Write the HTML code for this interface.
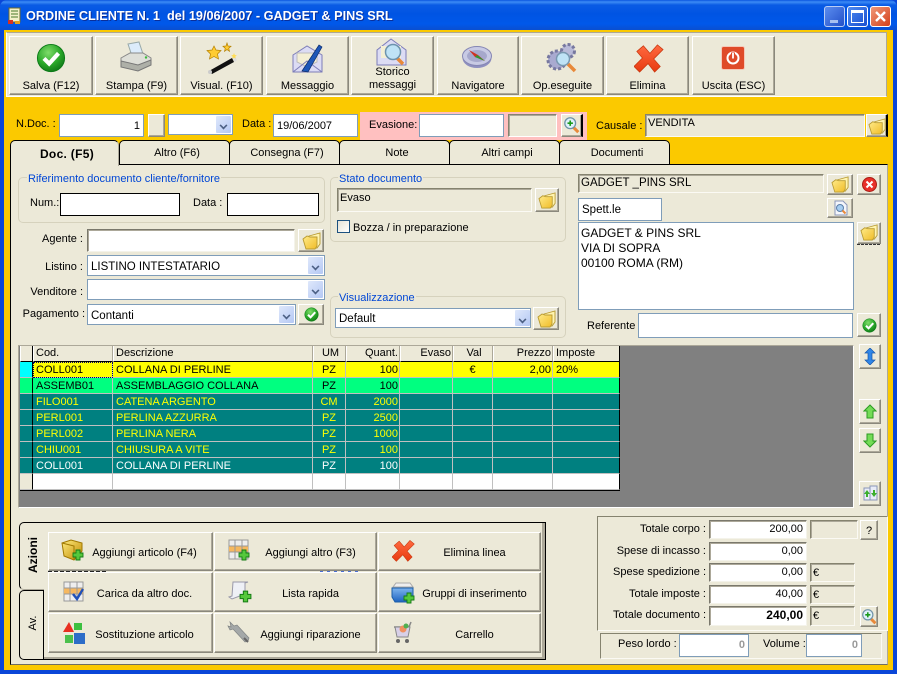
<!DOCTYPE html>
<html lang="it"><head><meta charset="utf-8"><title>Ordine cliente</title>
<style>
html,body{margin:0;padding:0;background:#0a46d8}
#w{position:relative;width:897px;height:674px;overflow:hidden;font:11px/14px "Liberation Sans",sans-serif;color:#000;background:#0a46d8}
#w div,#w span.a,#w svg.i{position:absolute;box-sizing:border-box}
.t{white-space:pre;height:14px}
.r{text-align:right}.c{text-align:center}
.btn{background:#ece9d8;border:1px solid;border-color:#fff #8a887c #8a887c #fff;box-shadow:inset -1px -1px #aca899}
.inp{background:#fff;border:1px solid #7f9db9;padding:4px 3px 2px;white-space:pre}
.blk{background:#fff;border:1px solid #000}
.sun{background:#fff;border:1px solid;border-color:#7a786c #f4f3ea #f4f3ea #7a786c;box-shadow:inset 1px 1px #aca899;white-space:pre;text-align:right;padding:1px 3px}
.gry{background:#ece9d8;border:1px solid;border-color:#85836f #fbfaf4 #fbfaf4 #85836f;box-shadow:inset 1px 1px #aca899;white-space:pre;padding:1px 2px 0}
.grp{border:1px solid #d6d2bd;border-radius:5px}
.leg{color:#0046d5;background:#ece9d8;white-space:pre;height:14px;padding:0 1px}
.arr{background:linear-gradient(135deg,#dfe8fb,#b4c8f4);border-radius:1px}
.arr:after{content:"";position:absolute;left:4px;top:6px;width:5px;height:5px;border-right:2px solid #4d6185;border-bottom:2px solid #4d6185;transform:rotate(45deg) scale(.8)}
.tab{background:#ece9d8;border:1px solid #000;border-radius:5px 5px 0 0;text-align:center;line-height:25px;font-size:11px;padding-left:5px}
.bl{font-size:11px;text-align:center;white-space:pre;height:14px}
table{border-collapse:separate;border-spacing:0;table-layout:fixed;font:11px/14px "Liberation Sans",sans-serif}
td{box-sizing:border-box;height:16px;padding:0 1px 0 3px;border-right:1px solid #c0c0c0;border-bottom:1px solid #c0c0c0;overflow:hidden;white-space:pre}
tr.h td{background:#ece9d8;border-bottom:1px solid #000;border-left:1px solid #fff;border-right:1px solid #aca899;padding-left:2px;line-height:15px}
tr.y td{background:#ff0;color:#000}tr.g td{background:#00ff80;color:#000}tr.e td{background:#008080;color:#ff0}tr.f td{background:#008080;color:#fff}tr.w td{background:#fff}
td.n{text-align:right}td.m{text-align:center;padding:0}
td.x{border-right:1px solid #000!important;padding:0}
</style></head><body>
<svg width="0" height="0" style="position:absolute">
<defs>
<radialGradient id="gc" cx=".4" cy=".3" r=".8"><stop offset="0" stop-color="#7fdc6a"/><stop offset=".55" stop-color="#2aa82a"/><stop offset="1" stop-color="#0b6e14"/></radialGradient>
<linearGradient id="gr" x1="0" y1="0" x2="0" y2="1"><stop offset="0" stop-color="#ff6a40"/><stop offset="1" stop-color="#e83a10"/></linearGradient>
<linearGradient id="gf" x1="0" y1="0" x2="1" y2="1"><stop offset="0" stop-color="#ffeb8a"/><stop offset="1" stop-color="#f0bc28"/></linearGradient>
<linearGradient id="gb" x1="0" y1="0" x2="0" y2="1"><stop offset="0" stop-color="#7db4ee"/><stop offset="1" stop-color="#1d63c0"/></linearGradient>
<linearGradient id="gy" x1="0" y1="0" x2="1" y2="1"><stop offset="0" stop-color="#ffec80"/><stop offset="1" stop-color="#c08a00"/></linearGradient>
<symbol id="ck" viewBox="0 0 32 32"><circle cx="16" cy="16" r="14.5" fill="url(#gc)" stroke="#0c7a18"/><path d="M8.5 16.5l5.5 5.5L24 11" fill="none" stroke="#fff" stroke-width="4.4"/></symbol>
<symbol id="xx" viewBox="0 0 32 32"><path d="M3 9L10 3l7 8 8-9 6 5-10 10 7 8-6 6-7-9-9 9-6-6 9-9z" fill="url(#gr)" stroke="#c8380f" stroke-width=".8"/></symbol>
<symbol id="fo" viewBox="0 0 20 20"><path d="M7 5l11-3v11l-3 4H9z" fill="#fff4b0" stroke="#b89a30" stroke-width=".9"/><path d="M1 8l4-3 3 1 7 0 0 9-2 3H4z" fill="url(#gf)" stroke="#b89a30" stroke-width=".9"/></symbol>
<symbol id="zm" viewBox="0 0 20 20"><path d="M11 12l6 6" stroke="#e8893a" stroke-width="3.4"/><circle cx="8" cy="8" r="6" fill="#dff0fb" stroke="#6f93a8" stroke-width="1.4"/><path d="M5 8h6M8 5v6" stroke="#1a9a1a" stroke-width="1.8"/></symbol>
<symbol id="pl" viewBox="0 0 12 12"><path d="M4 1h4v3h3v4H8v3H4V8H1V4h3z" fill="#55c83c" stroke="#157a14" stroke-width=".9"/></symbol>
</defs></svg>
<div id="w">
<!-- title bar -->
<div style="left:0;top:0;width:897px;height:30px;border-radius:7px 7px 0 0;background:linear-gradient(#0a56e0 0,#3d8bf5 2px,#0a5be4 5px,#0054e3 14px,#0058ea 24px,#0a4fd0 30px)"></div>
<svg class="i" style="left:8px;top:7px" width="14" height="18" viewBox="0 0 14 18"><rect x="1" y="1" width="11" height="14" fill="#f3f0c8" stroke="#6d6a30"/><path d="M3 4h7M3 7h7M3 10h7" stroke="#4a7a2a"/><rect x="0" y="13" width="5" height="4" fill="#d83020"/><rect x="7" y="14" width="5" height="3" fill="#e0a020"/></svg>
<div class="t" style="left:26px;top:9px;width:400px;color:#fff;font-weight:bold;font-size:12.7px;text-shadow:1px 1px #0a2f9a">ORDINE CLIENTE N. 1  del 19/06/2007 - GADGET &amp; PINS SRL</div>
<div style="left:824px;top:6px;width:21px;height:21px;border:1px solid #b9cdf5;border-radius:3px;background:linear-gradient(135deg,#5b8def,#2350c8)"><div style="left:5px;top:13px;width:8px;height:3px;background:#a8c0f0"></div></div>
<div style="left:847px;top:6px;width:21px;height:21px;border:1px solid #fff;border-radius:3px;background:linear-gradient(135deg,#4f8bf0,#1a4fd0)"><div style="left:3px;top:3px;width:13px;height:13px;border:1px solid #fff;border-top-width:3px"></div></div>
<div style="left:870px;top:6px;width:21px;height:21px;border:1px solid #fff;border-radius:3px;background:linear-gradient(135deg,#f09878,#d4401a)"><svg class="i" style="left:3px;top:3px" width="13" height="13" viewBox="0 0 13 13"><path d="M2 2l9 9M11 2l-9 9" stroke="#fff" stroke-width="2.4"/></svg></div>
<!-- yellow body -->
<div style="left:4px;top:30px;width:889px;height:640px;background:#fbc900"></div>
<!-- toolbar -->
<div style="left:6px;top:32px;width:881px;height:65px;background:#ece9d8;border:1px solid;border-color:#aca899 #aca899 #fff #fff"></div>
<div class="btn" style="left:9px;top:36px;width:84px;height:59px"><div class="c t" style="left:0;width:82px;top:42px">Salva (F12)</div></div>
<div class="btn" style="left:95px;top:36px;width:83px;height:59px"><div class="c t" style="left:0;width:81px;top:42px">Stampa (F9)</div></div>
<div class="btn" style="left:180px;top:36px;width:83px;height:59px"><div class="c t" style="left:0;width:81px;top:42px">Visual. (F10)</div></div>
<div class="btn" style="left:266px;top:36px;width:83px;height:59px"><div class="c t" style="left:0;width:81px;top:42px">Messaggio</div></div>
<div class="btn" style="left:351px;top:36px;width:83px;height:59px"><div class="c t" style="left:0;width:81px;top:29px;height:28px;line-height:13px;white-space:normal">Storico messaggi</div></div>
<div class="btn" style="left:437px;top:36px;width:82px;height:59px"><div class="c t" style="left:0;width:80px;top:42px">Navigatore</div></div>
<div class="btn" style="left:521px;top:36px;width:83px;height:59px"><div class="c t" style="left:0;width:81px;top:42px">Op.eseguite</div></div>
<div class="btn" style="left:606px;top:36px;width:83px;height:59px"><div class="c t" style="left:0;width:81px;top:42px">Elimina</div></div>
<div class="btn" style="left:692px;top:36px;width:83px;height:59px"><div class="c t" style="left:0;width:81px;top:42px">Uscita (ESC)</div></div>
<svg class="i" style="left:36px;top:43px" width="30" height="30"><use href="#ck"/></svg>
<svg class="i" style="left:120px;top:41px" width="32" height="32" viewBox="0 0 32 32"><path d="M8 3l11-2 4 12-11 2z" fill="#dcecfb" stroke="#9aa"/><path d="M1 17l9-5h13l8 5v6l-13 6-17-4z" fill="#dedfd8" stroke="#888"/><path d="M1 20l17 4 13-5v5l-13 6-17-4z" fill="#aeb0a8" stroke="#777"/><circle cx="26" cy="16.500" r="1.200" fill="#3bbb3b"/></svg>
<svg class="i" style="left:206px;top:42px" width="32" height="32" viewBox="0 0 32 32"><path d="M3 29L26 16l2 4L6 32z" fill="#111"/><circle cx="4" cy="30" r="2" fill="#ccc"/><path d="M26 15l3 5 2-2-2-4z" fill="#ddd"/><path d="M8 4l2 4 5 .5-3.5 3.5 1 5-4.5-2.500-4.500 2.500 1-5L1 8.500 6 8z" fill="#fc3" stroke="#b58000" stroke-width=".7"/><path d="M21 1l1 3 3 .300-2.300 2 .8 3-2.500-1.700-2.500 1.700.8-3L17 4.300 20 4z" fill="#fc3" stroke="#b58000" stroke-width=".7"/><path d="M28 11l.8 2 2 .2-1.500 1.400.4 2-1.700-1-1.700 1 .4-2-1.500-1.400 2-.2z" fill="#fd5"/></svg>
<svg class="i" style="left:292px;top:42px" width="32" height="32" viewBox="0 0 32 32"><path d="M1 13L15 4l15 9v17H1z" fill="#dcdcf4" stroke="#7d7db8"/><path d="M5 11h20v9L15 25 5 20z" fill="#f4efd4" stroke="#bbb"/><path d="M1 30l14-11 15 11" fill="none" stroke="#7d7db8"/><path d="M10 29L27 3l3 2-14 25z" fill="#1d56b8" stroke="#0d2c6a" stroke-width=".7"/></svg>
<svg class="i" style="left:376px;top:37px" width="32" height="32" viewBox="0 0 32 32"><path d="M1 13L15 2l15 11v15H1z" fill="#dcdcf4" stroke="#7d7db8"/><path d="M5 9h20v12H5z" fill="#f4efd4"/><path d="M21 21l6 6" stroke="#e8893a" stroke-width="3.5"/><circle cx="17" cy="15" r="7.500" fill="#bfe3f6" stroke="#6d93ad" stroke-width="1.500"/></svg>
<svg class="i" style="left:462px;top:45px" width="30" height="24" viewBox="0 0 30 24"><ellipse cx="15" cy="13" rx="14.500" ry="10" fill="#8f90c0"/><ellipse cx="15" cy="11" rx="14.500" ry="9.500" fill="#c8cae4" stroke="#8586b4"/><ellipse cx="15" cy="11" rx="10" ry="6" fill="#a6a8cc"/><path d="M7 5l9 5 7 6-10-4z" fill="#d03020"/><path d="M15 10l8 6-10-4z" fill="#2a9a30"/></svg>
<svg class="i" style="left:546px;top:42px" width="32" height="32" viewBox="0 0 32 32"><circle cx="11" cy="18" r="9" fill="#a9aad0" stroke="#77789f" stroke-width="3" stroke-dasharray="3 2"/><circle cx="22" cy="9" r="6.500" fill="#b9bad8" stroke="#77789f" stroke-width="3" stroke-dasharray="3 2"/><path d="M22 22l7 7" stroke="#e8893a" stroke-width="3.500"/><circle cx="17" cy="17" r="6.500" fill="#bfe3f6" stroke="#7898b0" stroke-width="1.500"/></svg>
<svg class="i" style="left:634px;top:43px" width="30" height="30"><use href="#xx"/></svg>
<svg class="i" style="left:721px;top:46px" width="24" height="24" viewBox="0 0 24 24"><rect x=".5" y=".5" width="23" height="23" rx="2" fill="#df4a28" stroke="#f5c8b8"/><circle cx="12" cy="12" r="5.500" fill="none" stroke="#fff" stroke-width="2"/><path d="M12 6.500v6" stroke="#df4a28" stroke-width="4"/><path d="M12 7v5.500" stroke="#fff" stroke-width="1.800"/></svg>
<!-- doc row -->
<div class="t" style="left:16px;top:117px">N.Doc. :</div>
<div class="inp r" style="left:59px;top:114px;width:85px;height:23px">1</div>
<div class="btn" style="left:148px;top:114px;width:17px;height:23px"></div>
<div class="inp" style="left:168px;top:114px;width:65px;height:21px"><div class="arr" style="left:47px;top:1px;width:15px;height:17px"></div></div>
<div class="t" style="left:242px;top:117px">Data :</div>
<div class="inp" style="left:273px;top:114px;width:85px;height:23px">19/06/2007</div>
<div style="left:360px;top:112px;width:227px;height:28px;background:#ffc0c0"></div>
<div class="t" style="left:369px;top:118px">Evasione:</div>
<div class="inp" style="left:419px;top:114px;width:85px;height:23px"></div>
<div class="gry" style="left:508px;top:114px;width:49px;height:23px;border-color:#85836f #fff #fff #85836f"></div>
<div class="btn" style="left:561px;top:114px;width:22px;height:23px;border-right:2px solid #000"><svg class="i" style="left:1px;top:1px" width="18" height="18"><use href="#zm"/></svg></div>
<div class="t" style="left:596px;top:119px">Causale :</div>
<div class="gry" style="left:645px;top:114px;width:220px;height:23px">VENDITA</div>
<div class="btn" style="left:866px;top:114px;width:22px;height:23px;border-right:2px solid #000"><svg class="i" style="left:1px;top:2px" width="19" height="19"><use href="#fo"/></svg></div>
<!-- tab panel -->
<div style="left:10px;top:164px;width:878px;height:501px;background:#ece9d8;border:1px solid;border-color:#000 #aca899 #6f6e62 #000"></div>
<div class="tab" style="left:119px;top:140px;width:111px;height:25px">Altro (F6)</div>
<div class="tab" style="left:229px;top:140px;width:111px;height:25px">Consegna (F7)</div>
<div class="tab" style="left:339px;top:140px;width:111px;height:25px">Note</div>
<div class="tab" style="left:449px;top:140px;width:111px;height:25px">Altri campi</div>
<div class="tab" style="left:559px;top:140px;width:111px;height:25px">Documenti</div>
<div class="tab" style="left:10px;top:140px;width:109px;height:26px;border-bottom:0;border-right-color:#aca899;font-weight:bold;font-size:12px;line-height:26px;letter-spacing:.3px">Doc. (F5)</div>
<!-- riferimento -->
<div class="grp" style="left:18px;top:177px;width:307px;height:46px"></div>
<div class="leg" style="left:27px;top:172px">Riferimento documento cliente/fornitore</div>
<div class="t" style="left:30px;top:196px">Num.:</div>
<div class="blk" style="left:60px;top:193px;width:120px;height:23px"></div>
<div class="t" style="left:193px;top:196px">Data :</div>
<div class="blk" style="left:227px;top:193px;width:92px;height:23px"></div>
<div class="t r" style="left:20px;width:63px;top:232px">Agente :</div>
<div class="sun" style="left:87px;top:229px;width:208px;height:23px"></div>
<div class="btn" style="left:298px;top:229px;width:26px;height:23px"><svg class="i" style="left:3px;top:1px" width="20" height="20"><use href="#fo"/></svg></div>
<div class="t r" style="left:20px;width:63px;top:260px">Listino :</div>
<div class="inp" style="left:87px;top:255px;width:238px;height:21px;font-size:11.5px">LISTINO INTESTATARIO<div class="arr" style="left:220px;top:1px;width:15px;height:17px"></div></div>
<div class="t r" style="left:20px;width:63px;top:285px">Venditore :</div>
<div class="inp" style="left:87px;top:279px;width:238px;height:21px"><div class="arr" style="left:220px;top:1px;width:15px;height:17px"></div></div>
<div class="t r" style="left:18px;width:67px;top:307px">Pagamento :</div>
<div class="inp" style="left:87px;top:304px;width:209px;height:21px;font-size:11.5px">Contanti<div class="arr" style="left:191px;top:1px;width:15px;height:17px"></div></div>
<div class="btn" style="left:298px;top:304px;width:26px;height:21px"><svg class="i" style="left:5px;top:2px" width="15" height="15"><use href="#ck"/></svg></div>
<!-- stato -->
<div class="grp" style="left:330px;top:177px;width:236px;height:65px"></div>
<div class="leg" style="left:338px;top:172px">Stato documento</div>
<div class="gry" style="left:337px;top:188px;width:195px;height:24px;padding-top:2px">Evaso</div>
<div class="btn" style="left:535px;top:188px;width:24px;height:24px"><svg class="i" style="left:2px;top:2px" width="19" height="19"><use href="#fo"/></svg></div>
<div style="left:337px;top:220px;width:13px;height:13px;background:linear-gradient(135deg,#e4e2d6,#fff);border:1px solid #1c5180"></div>
<div class="t" style="left:353px;top:221px">Bozza / in preparazione</div>
<!-- visualizzazione -->
<div class="grp" style="left:330px;top:296px;width:236px;height:42px"></div>
<div class="leg" style="left:338px;top:291px">Visualizzazione</div>
<div class="inp" style="left:335px;top:308px;width:196px;height:20px;padding:3px 3px 1px;font-size:11.5px">Default<div class="arr" style="left:179px;top:1px;width:15px;height:16px"></div></div>
<div class="btn" style="left:533px;top:307px;width:26px;height:23px"><svg class="i" style="left:3px;top:1px" width="20" height="20"><use href="#fo"/></svg></div>
<!-- cliente -->
<div class="gry" style="left:578px;top:174px;width:246px;height:19px;padding-top:1px;font-size:11.5px">GADGET _PINS SRL</div>
<div class="btn" style="left:827px;top:174px;width:26px;height:21px"><svg class="i" style="left:3px;top:0" width="19" height="19"><use href="#fo"/></svg></div>
<div class="btn" style="left:857px;top:174px;width:24px;height:21px"><svg class="i" style="left:4px;top:2px" width="15" height="15" viewBox="0 0 15 15"><circle cx="7.500" cy="7.500" r="7" fill="#e8302a" stroke="#a81c14"/><path d="M4.500 4.500l6 6M10.500 4.500l-6 6" stroke="#fff" stroke-width="2"/></svg></div>
<div class="inp" style="left:578px;top:198px;width:84px;height:23px;font-size:11.5px">Spett.le</div>
<div class="btn" style="left:827px;top:198px;width:26px;height:20px"><svg class="i" style="left:6px;top:1px" width="14" height="16" viewBox="0 0 14 16"><path d="M1 1h8l4 4v10H1z" fill="#f4f6fb" stroke="#8a96b8"/><circle cx="6" cy="8" r="3.500" fill="#a6cdf0" stroke="#5a7ea8"/><path d="M8.500 10.500l3 3" stroke="#e8893a" stroke-width="2"/></svg></div>
<div class="inp" style="left:578px;top:222px;width:276px;height:88px;font-size:12px;line-height:15px;padding:3px 2px">GADGET &amp; PINS SRL
VIA DI SOPRA
00100 ROMA (RM)</div>
<div class="btn" style="left:857px;top:222px;width:24px;height:22px"><svg class="i" style="left:2px;top:0" width="19" height="19"><use href="#fo"/></svg></div>
<div style="left:857px;top:244px;width:24px;height:1px;background:repeating-linear-gradient(90deg,#333 0 3px,#ece9d8 3px 4px)"></div>
<div class="t" style="left:587px;top:319px">Referente</div>
<div class="inp" style="left:638px;top:313px;width:215px;height:25px"></div>
<div class="btn" style="left:857px;top:313px;width:24px;height:24px"><svg class="i" style="left:4px;top:4px" width="15" height="15"><use href="#ck"/></svg></div>
<!-- grid -->
<div style="left:18px;top:345px;width:836px;height:163px;background:#808080;border:1px solid;border-color:#aca899 #fff #fff #aca899"></div>
<div style="left:20px;top:346px;width:600px;height:145px;background:#fff;border-bottom:1px solid #000">
<table style="width:600px;position:absolute;left:0;top:0">
<colgroup><col style="width:13px"><col style="width:80px"><col style="width:200px"><col style="width:33px"><col style="width:54px"><col style="width:53px"><col style="width:40px"><col style="width:60px"><col style="width:67px"></colgroup>
<tr class="h"><td class="x" style="background:#ece9d8"></td><td>Cod.</td><td>Descrizione</td><td class="m">UM</td><td class="n">Quant.</td><td class="n">Evaso</td><td class="m">Val</td><td class="n">Prezzo</td><td style="border-right:1px solid #000">Imposte</td></tr>
<tr class="y"><td class="x" style="background:#0ff"></td><td style="outline:1px dotted #00006a;outline-offset:-1px">COLL001</td><td>COLLANA DI PERLINE</td><td class="m">PZ</td><td class="n">100</td><td></td><td class="m">€</td><td class="n">2,00</td><td style="border-right:1px solid #000">20%</td></tr>
<tr class="g"><td class="x" style="background:#00ff80"></td><td>ASSEMB01</td><td>ASSEMBLAGGIO COLLANA</td><td class="m">PZ</td><td class="n">100</td><td></td><td></td><td></td><td style="border-right:1px solid #000"></td></tr>
<tr class="e"><td class="x"></td><td>FILO001</td><td>CATENA ARGENTO</td><td class="m">CM</td><td class="n">2000</td><td></td><td></td><td></td><td style="border-right:1px solid #000"></td></tr>
<tr class="e"><td class="x"></td><td>PERL001</td><td>PERLINA AZZURRA</td><td class="m">PZ</td><td class="n">2500</td><td></td><td></td><td></td><td style="border-right:1px solid #000"></td></tr>
<tr class="e"><td class="x"></td><td>PERL002</td><td>PERLINA NERA</td><td class="m">PZ</td><td class="n">1000</td><td></td><td></td><td></td><td style="border-right:1px solid #000"></td></tr>
<tr class="e"><td class="x"></td><td>CHIU001</td><td>CHIUSURA A VITE</td><td class="m">PZ</td><td class="n">100</td><td></td><td></td><td></td><td style="border-right:1px solid #000"></td></tr>
<tr class="f"><td class="x"></td><td>COLL001</td><td>COLLANA DI PERLINE</td><td class="m">PZ</td><td class="n">100</td><td></td><td></td><td></td><td style="border-right:1px solid #000"></td></tr>
<tr class="w"><td class="x" style="background:#ece9d8"></td><td></td><td></td><td></td><td></td><td></td><td></td><td></td><td style="border-right:1px solid #000"></td></tr>
</table></div>
<!-- side buttons -->
<div class="btn" style="left:859px;top:344px;width:22px;height:25px"><svg class="i" style="left:4px;top:3px" width="12" height="17" viewBox="0 0 12 17"><path d="M6 0l5 5H8v7h3l-5 5-5-5h3V5H1z" fill="#2f86e8" stroke="#1655a8" stroke-width=".7"/></svg></div>
<div class="btn" style="left:859px;top:399px;width:22px;height:25px"><svg class="i" style="left:3px;top:4px" width="14" height="15" viewBox="0 0 14 15"><path d="M7 1l6 6H10v7H4V7H1z" fill="#74dc56" stroke="#2c9a22"/></svg></div>
<div class="btn" style="left:859px;top:428px;width:22px;height:25px"><svg class="i" style="left:3px;top:4px" width="14" height="15" viewBox="0 0 14 15"><path d="M7 14l6-6H10V1H4v7H1z" fill="#74dc56" stroke="#2c9a22"/></svg></div>
<div class="btn" style="left:859px;top:481px;width:22px;height:25px"><svg class="i" style="left:3px;top:3px" width="15" height="17" viewBox="0 0 15 17"><rect x="1" y="3" width="7" height="12" fill="#e8ecf8" stroke="#8a96b8"/><rect x="7" y="1" width="7" height="14" fill="#e8ecf8" stroke="#8a96b8"/><path d="M1 9l3-4 3 4H5v3H3V9z" fill="#3cb02c"/><path d="M14 8l-3 4-3-4h2V5h2v3z" fill="#3cb02c"/></svg></div>
<!-- bottom tabs -->
<div style="left:43px;top:522px;width:503px;height:138px;background:#ece9d8;border:1px solid #000;border-left:0;box-shadow:inset -3px -2px 0 #aca899"></div>
<div style="left:19px;top:522px;width:25px;height:68px;background:#ece9d8;border:1px solid #000;border-right:0;border-bottom:1px solid #aca899;border-radius:5px 0 0 5px"></div>
<div style="left:19px;top:590px;width:25px;height:70px;background:#ece9d8;border:1px solid #000;border-radius:5px 0 0 5px"></div>
<div class="t c" style="left:3px;top:548px;width:60px;font-weight:bold;font-size:12px;transform:rotate(-90deg)">Azioni</div>
<div class="t c" style="left:3px;top:616px;width:60px;transform:rotate(-90deg)">Av.</div>
<div style="left:48px;top:570px;width:60px;height:2px;background:repeating-linear-gradient(90deg,#222 0 4px,transparent 4px 6px)"></div>
<div style="left:320px;top:570px;width:42px;height:2px;background:repeating-linear-gradient(90deg,#4a6ed0 0 3px,transparent 3px 7px)"></div>
<div class="btn" style="left:48px;top:532px;width:165px;height:39px"><div class="bl" style="left:28px;width:135px;top:13px">Aggiungi articolo (F4)</div></div>
<div class="btn" style="left:214px;top:532px;width:163px;height:39px"><div class="bl" style="left:29px;width:133px;top:13px">Aggiungi altro (F3)</div></div>
<div class="btn" style="left:378px;top:532px;width:163px;height:39px"><div class="bl" style="left:29px;width:133px;top:13px">Elimina linea</div></div>
<div class="btn" style="left:48px;top:572px;width:165px;height:40px"><div class="bl" style="left:28px;width:135px;top:14px">Carica da altro doc.</div></div>
<div class="btn" style="left:214px;top:572px;width:163px;height:40px"><div class="bl" style="left:29px;width:133px;top:14px">Lista rapida</div></div>
<div class="btn" style="left:378px;top:572px;width:163px;height:40px"><div class="bl" style="left:29px;width:133px;top:14px">Gruppi di inserimento</div></div>
<div class="btn" style="left:48px;top:613px;width:165px;height:40px"><div class="bl" style="left:28px;width:135px;top:14px">Sostituzione articolo</div></div>
<div class="btn" style="left:214px;top:613px;width:163px;height:40px"><div class="bl" style="left:29px;width:133px;top:14px">Aggiungi riparazione</div></div>
<div class="btn" style="left:378px;top:613px;width:163px;height:40px"><div class="bl" style="left:29px;width:133px;top:14px">Carrello</div></div>
<svg class="i" style="left:61px;top:538px" width="24" height="24" viewBox="0 0 24 24"><path d="M1 5l9-3 11 3v8l-8 9-10-4z" fill="url(#gy)" stroke="#a07800"/><path d="M1 5l12 3v14" fill="none" stroke="#a07800"/><use href="#pl" x="11" y="11" width="12" height="12"/></svg>
<svg class="i" style="left:228px;top:539px" width="22" height="22" viewBox="0 0 22 22"><rect x="1" y="1" width="19" height="19" fill="#eee" stroke="#999"/><rect x="1" y="7" width="19" height="6" fill="#f6b860"/><path d="M7 1v19M14 1v19M1 7h19M1 13h19" stroke="#999"/><use href="#pl" x="10" y="10" width="12" height="12"/></svg>
<svg class="i" style="left:392px;top:539px" width="23" height="23"><use href="#xx"/></svg>
<svg class="i" style="left:63px;top:581px" width="22" height="22" viewBox="0 0 22 22"><rect x="1" y="1" width="19" height="19" fill="#eee" stroke="#999"/><rect x="1" y="7" width="19" height="6" fill="#f6b860"/><path d="M7 1v19M14 1v19M1 7h19M1 13h19" stroke="#999"/><path d="M10 13l4 5 6-10" fill="none" stroke="#2050b8" stroke-width="2.400"/></svg>
<svg class="i" style="left:228px;top:579px" width="24" height="24" viewBox="0 0 24 24"><path d="M5 3h15l-3 1v11l-13 5-3-2 3-1z" fill="#eef0f6" stroke="#99a"/><use href="#pl" x="11" y="11" width="13" height="13"/></svg>
<svg class="i" style="left:391px;top:580px" width="24" height="24" viewBox="0 0 24 24"><path d="M2 7l3-4h14l3 4z" fill="#eee" stroke="#aaa"/><path d="M1 8h21v9l-5 5H4l-3-5z" fill="url(#gb)" stroke="#1c5ea8"/><use href="#pl" x="12" y="12" width="12" height="12"/></svg>
<svg class="i" style="left:62px;top:621px" width="24" height="24" viewBox="0 0 24 24"><path d="M1 11L7 1l5 10z" fill="#e83020"/><path d="M12 2l8 0 0 7-8 0z" fill="#3cc040"/><rect x="12" y="12" width="11" height="11" fill="#2d6dc8"/><path d="M3 14h8v8H3z" fill="#4bc04c"/></svg>
<svg class="i" style="left:227px;top:621px" width="26" height="24" viewBox="0 0 26 24"><path d="M3 1l4 4 3-1 12 13-1 3-3 1L6 8 3 9 1 5l3 1z" fill="#a4a8a8" stroke="#808484" stroke-width=".7"/><path d="M17 17l4 4" stroke="#666" stroke-width="2"/></svg>
<svg class="i" style="left:393px;top:621px" width="20" height="23" viewBox="0 0 20 23"><path d="M1 6h15l2-5" fill="none" stroke="#888" stroke-width="1.500"/><path d="M2 6l2 10h11l2-10z" fill="#d8d0e8" stroke="#888"/><circle cx="10" cy="8" r="3.500" fill="#f09060"/><circle cx="13" cy="5" r="2.500" fill="#50b050"/><circle cx="5" cy="20" r="2" fill="#666"/><circle cx="14" cy="20" r="2" fill="#666"/></svg>
<!-- totals -->
<div style="left:597px;top:516px;width:291px;height:115px;border:1px solid;border-color:#85836f #fbfaf4 #fbfaf4 #85836f"></div>
<div class="t r" style="left:600px;width:106px;top:522px">Totale corpo :</div>
<div class="t r" style="left:600px;width:106px;top:544px">Spese di incasso :</div>
<div class="t r" style="left:600px;width:106px;top:565px">Spese spedizione :</div>
<div class="t r" style="left:600px;width:106px;top:587px">Totale imposte :</div>
<div class="t r" style="left:600px;width:106px;top:608px">Totale documento :</div>
<div class="sun" style="left:709px;top:520px;width:98px;height:19px">200,00</div>
<div class="sun" style="left:709px;top:542px;width:98px;height:19px">0,00</div>
<div class="sun" style="left:709px;top:563px;width:98px;height:19px">0,00</div>
<div class="sun" style="left:709px;top:585px;width:98px;height:19px">40,00</div>
<div class="sun" style="left:709px;top:606px;width:98px;height:20px;font-weight:bold;font-size:12px">240,00</div>
<div class="gry" style="left:810px;top:520px;width:48px;height:19px"></div>
<div class="gry" style="left:810px;top:563px;width:45px;height:19px;padding-top:2px">€</div>
<div class="gry" style="left:810px;top:585px;width:45px;height:19px;padding-top:2px">€</div>
<div class="gry" style="left:810px;top:606px;width:45px;height:20px;padding-top:2px">€</div>
<div class="btn c" style="left:860px;top:520px;width:18px;height:20px;line-height:20px">?</div>
<div class="btn" style="left:860px;top:606px;width:18px;height:21px"><svg class="i" style="left:0;top:1px" width="17" height="17"><use href="#zm"/></svg></div>
<div style="left:600px;top:633px;width:282px;height:26px;border:1px solid;border-color:#85836f #fbfaf4 #fbfaf4 #85836f"></div>
<div class="t" style="left:618px;top:637px">Peso lordo :</div>
<div class="inp r" style="left:679px;top:634px;width:70px;height:23px;color:#9a9a9a;font-weight:bold;padding-top:3px">0</div>
<div class="t" style="left:763px;top:637px">Volume :</div>
<div class="inp r" style="left:806px;top:634px;width:56px;height:23px;color:#9a9a9a;font-weight:bold;padding-top:3px">0</div>
</div>
</body></html>
